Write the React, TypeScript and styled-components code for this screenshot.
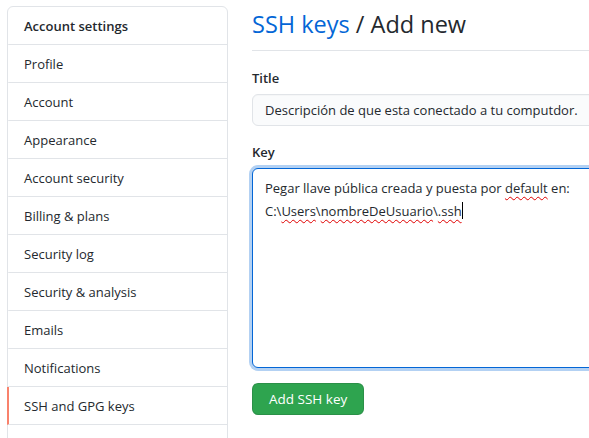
import React from 'react'
import styled, { createGlobalStyle } from 'styled-components'

const GlobalStyle = createGlobalStyle`
  *, *::before, *::after {
    box-sizing: border-box;
  }
  html, body {
    margin: 0;
    padding: 0;
    background: #ffffff;
    overflow: hidden;
  }
  body {
    font-family: "Open Sans", "Noto Sans", Arial, sans-serif;
    font-size: 13px;
    color: #24292e;
  }
`

const Page = styled.div`
  display: flex;
  gap: 24px;
  padding: 6px 0 0 7px;
  width: 700px;
  height: 438px;
  overflow: hidden;
`

// the menu runs on below the window, like the page it was cut from
const Menu = styled.nav`
  width: 221px;
  min-height: 460px;
  flex-shrink: 0;
  border: 1px solid #e1e4e8;
  border-radius: 6px 6px 0 0;
  background: #fff;
`

const MenuItem = styled.div<{ $heading?: boolean; $active?: boolean }>`
  height: 38px;
  display: flex;
  align-items: center;
  padding-left: 15px;
  border-bottom: 1px solid #e1e4e8;
  border-left: 2px solid ${p => (p.$active ? '#f9826c' : 'transparent')};
  margin-left: -1px;
  font-weight: ${p => (p.$heading ? 600 : 400)};
  color: #24292e;
`

const Main = styled.main`
  flex: 1;
`

const Subhead = styled.div`
  padding-bottom: 8px;
  margin-bottom: 16px;
  border-bottom: 1px solid #e1e4e8;
`

const Heading = styled.h2`
  margin: 0;
  font-size: 23.5px;
  line-height: 36px;
  font-weight: 400;
  color: #24292e;
`

const Crumb = styled.span`
  color: #0366d6;
`

const FormGroup = styled.div`
  margin-bottom: 15px;
`

const Label = styled.label`
  display: block;
  font-weight: 600;
  line-height: 22px;
  margin-bottom: 5px;
`

const Input = styled.div`
  height: 32px;
  display: flex;
  align-items: center;
  padding: 0 12px;
  border: 1px solid #e1e4e8;
  border-radius: 6px;
  background: #fafbfc;
  box-shadow: inset 0 1px 0 rgba(225, 228, 232, 0.2);
  white-space: nowrap;
`

const TextArea = styled.div`
  height: 200px;
  padding: 8px 12px;
  border: 1px solid #0366d6;
  border-radius: 6px;
  box-shadow: 0 0 0 3px rgba(3, 102, 214, 0.3);
  line-height: 23px;
  background: #fff;
  white-space: nowrap;
`

const Misspelled = styled.span`
  text-decoration: underline wavy #e00000;
  text-decoration-thickness: 1px;
  text-underline-offset: 3px;
  text-decoration-skip-ink: none;
`

const Caret = styled.span`
  display: inline-block;
  width: 1px;
  height: 17px;
  background: #000;
  vertical-align: -3px;
`

const Button = styled.button`
  height: 32px;
  padding: 0 16px;
  font-family: inherit;
  font-size: 13.5px;
  color: #fff;
  background: #2ea44f;
  border: 1px solid rgba(27, 31, 35, 0.15);
  border-radius: 6px;
`

const items = [
  'Profile',
  'Account',
  'Appearance',
  'Account security',
  'Billing & plans',
  'Security log',
  'Security & analysis',
  'Emails',
  'Notifications',
  'SSH and GPG keys',
]

export default function App() {
  return (
    <>
      <GlobalStyle />
      <Page>
        <Menu>
          <MenuItem $heading>Account settings</MenuItem>
          {items.map(item => (
            <MenuItem key={item} $active={item === 'SSH and GPG keys'}>
              {item}
            </MenuItem>
          ))}
        </Menu>
        <Main>
          <Subhead>
            <Heading>
              <Crumb>SSH keys</Crumb> / Add new
            </Heading>
          </Subhead>
          <FormGroup>
            <Label>Title</Label>
            <Input>Descripción de que esta conectado a tu computdor.</Input>
          </FormGroup>
          <FormGroup>
            <Label>Key</Label>
            <TextArea>
              Pegar llave pública creada y puesta por <Misspelled>default</Misspelled> en:
              <br />
              C:\<Misspelled>Users</Misspelled>\<Misspelled>nombreDeUsuario</Misspelled>\<Misspelled>.ssh</Misspelled>
              <Caret />
            </TextArea>
          </FormGroup>
          <Button>Add SSH key</Button>
        </Main>
      </Page>
    </>
  )
}
